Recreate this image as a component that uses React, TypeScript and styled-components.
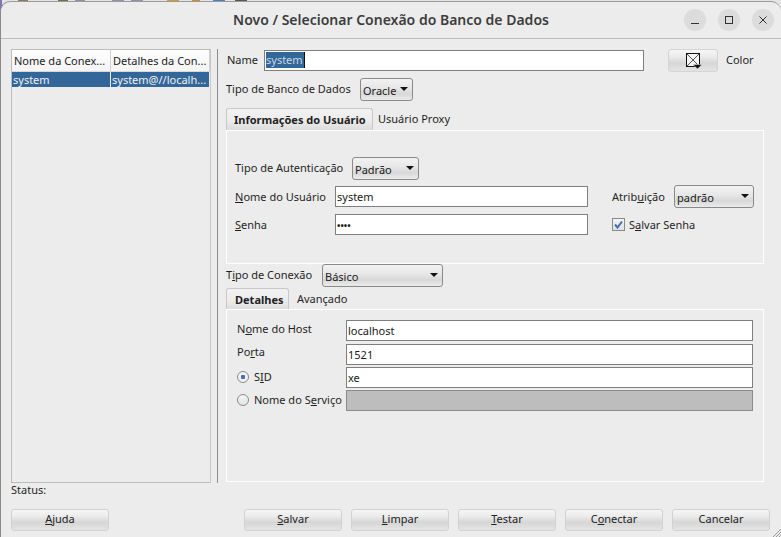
import React from "react";
import styled, { createGlobalStyle } from "styled-components";

const Global = createGlobalStyle`
  html, body {
    margin: 0;
    padding: 0;
    width: 781px;
    height: 537px;
    overflow: hidden;
    background-color: #e4e4e4;
    background-repeat: no-repeat;
    background-image:
      linear-gradient(#8a7a5c, #8a7a5c), linear-gradient(#7a6a50, #7a6a50),
      linear-gradient(#8f93a8, #8f93a8), linear-gradient(#8f93a8, #8f93a8),
      linear-gradient(#8f93a8, #8f93a8), linear-gradient(#c8a030, #c8a030),
      linear-gradient(#d08a30, #d08a30), linear-gradient(#4a80c0, #4a80c0),
      linear-gradient(#555, #555), linear-gradient(#7d78b0, #7d78b0);
    background-size:
      10px 1px, 10px 1px, 10px 1px, 12px 1px, 12px 1px, 12px 1px, 8px 1px, 12px 1px, 12px 1px, 2px 10px;
    background-position:
      18px 0, 58px 0, 75px 0, 112px 0, 131px 0, 167px 0, 192px 0, 213px 0, 235px 0, 0 0;
  }
  * { box-sizing: border-box; }
`;

const gloss = `linear-gradient(to bottom, #f6f6f6 0%, #ececec 30%, #d6d6d6 62%, #e4e4e4 100%)`;

const Caret = () => (
  <CaretIcon viewBox="0 0 8 4">
    <path d="M0 0h8L4 4z" fill="#111" />
  </CaretIcon>
);

const Key = styled.span`
  text-decoration: underline;
  text-underline-offset: 1px;
`;

const App = () => {
  return (
    <>
      <Global />
      <Window>
        <TitleBar>
          <Title>Novo / Selecionar Conexão do Banco de Dados</Title>
          <WinButtons>
            <WinButton>
              <svg width="10" height="10" viewBox="0 0 10 10">
                <path d="M1 8.5h8" stroke="#333" strokeWidth="1" />
              </svg>
            </WinButton>
            <WinButton>
              <svg width="10" height="10" viewBox="0 0 10 10">
                <rect x="1.5" y="1.5" width="7" height="7" fill="none" stroke="#333" />
              </svg>
            </WinButton>
            <WinButton>
              <svg width="10" height="10" viewBox="0 0 10 10">
                <path d="M1.5 1.5l7 7M8.5 1.5l-7 7" stroke="#333" strokeWidth="1" />
              </svg>
            </WinButton>
          </WinButtons>
        </TitleBar>

        <Content>
          <ListBox>
            <ListHead>
              <HeadCell $w={99}>Nome da Conex...</HeadCell>
              <HeadCell $w={99}>Detalhes da Con...</HeadCell>
            </ListHead>
            <ListRow>
              <RowCell $w={99}>system</RowCell>
              <RowCell $w={99}>system@//localh...</RowCell>
            </ListRow>
          </ListBox>
          <Divider />
          <Form>
            <NameRow>
              <Label>Name</Label>
              <NameInput>
                <Selected>system</Selected>
              </NameInput>
              <ColorButton>
                <svg width="16" height="17" viewBox="0 0 16 17">
                  <rect x="0.5" y="0.5" width="13" height="13" fill="#f4f4f4" stroke="#111" />
                  <path d="M1 1l12 12M13 1L1 13" stroke="#111" strokeWidth="0.7" />
                  <path d="M7 11.5h9l-4.5 4.5z" fill="#111" stroke="#ececec" strokeWidth="0.5" />
                </svg>
              </ColorButton>
              <Label>Color</Label>
            </NameRow>

            <DbRow>
              <Label>Tipo de Banco de Dados</Label>
              <Select $w={53}>
                Oracle
                <Caret />
              </Select>
            </DbRow>

            <Tabs $gap={7}>
              <ActiveTab $w={147} $pad={7}>
                Informações do Usuário
              </ActiveTab>
              <Tab $pad={5}>Usuário Proxy</Tab>
            </Tabs>
            <UserPanel>
              <AuthRow>
                <Label>Tipo de Autenticação</Label>
                <Select $w={67}>
                  Padrão
                  <Caret />
                </Select>
              </AuthRow>
              <UserRow>
                <UserFields>
                  <FieldRow>
                    <FieldLabel $w={100}>
                      <Key>N</Key>ome do Usuário
                    </FieldLabel>
                    <Input $w={253}>system</Input>
                  </FieldRow>
                  <FieldRow>
                    <FieldLabel $w={100}>
                      <Key>S</Key>enha
                    </FieldLabel>
                    <Input $w={253}>
                      <Dots>••••</Dots>
                    </Input>
                  </FieldRow>
                </UserFields>
                <SideFields>
                  <RoleRow>
                    <RoleLabel>
                      Atrib<Key>u</Key>ição
                    </RoleLabel>
                    <Select $w={80}>
                      padrão
                      <Caret />
                    </Select>
                  </RoleRow>
                  <CheckRow>
                    <CheckBox>
                      <svg width="9" height="9" viewBox="0 0 9 9">
                        <path d="M1 4.5l2.5 3L8 1.5" fill="none" stroke="#3f73b5" strokeWidth="2" />
                      </svg>
                    </CheckBox>
                    <span>
                      S<Key>a</Key>lvar Senha
                    </span>
                  </CheckRow>
                </SideFields>
              </UserRow>
            </UserPanel>

            <ConnRow>
              <Label>
                T<Key>i</Key>po de Conexão
              </Label>
              <Select $w={121}>
                Básico
                <Caret />
              </Select>
            </ConnRow>

            <Tabs $gap={1}>
              <ActiveTab $w={63} $pad={8}>
                Detalhes
              </ActiveTab>
              <Tab $pad={8}>Avançado</Tab>
            </Tabs>
            <DetailPanel>
              <DetailRow>
                <DetailLabel>
                  N<Key>o</Key>me do Host
                </DetailLabel>
                <Input $w={407}>localhost</Input>
              </DetailRow>
              <DetailRow>
                <DetailLabel>
                  Po<Key>r</Key>ta
                </DetailLabel>
                <Input $w={407}>1521</Input>
              </DetailRow>
              <DetailRow>
                <RadioLabel>
                  <Radio $on />
                  S<Key>I</Key>D
                </RadioLabel>
                <Input $w={407}>xe</Input>
              </DetailRow>
              <DetailRow>
                <RadioLabel>
                  <Radio />
                  Nome do S<Key>e</Key>rviço
                </RadioLabel>
                <DisabledInput />
              </DetailRow>
            </DetailPanel>
          </Form>
        </Content>

        <Status>Status:</Status>

        <Footer>
          <FootButton>
            <Key>A</Key>juda
          </FootButton>
          <FootRight>
            <FootButton>
              <Key>S</Key>alvar
            </FootButton>
            <FootButton>
              <Key>L</Key>impar
            </FootButton>
            <FootButton>
              <Key>T</Key>estar
            </FootButton>
            <FootButton>
              C<Key>o</Key>nectar
            </FootButton>
            <FootButton>Cancelar</FootButton>
          </FootRight>
        </Footer>
        <Grip viewBox="0 0 8 8">
          <path d="M8 0L0 8M8 3L3 8M8 6L6 8" stroke="#9a9a9a" strokeWidth="1" />
        </Grip>
      </Window>
    </>
  );
};

export default App;

const Window = styled.div`
  position: relative;
  width: 781px;
  height: 536px;
  margin-top: 1px;
  background: #ececec;
  border-top: 1px solid #9a9a9a;
  border-left: 1px solid #8a8a8a;
  border-radius: 10px 10px 0 0;
  font-family: "Noto Sans", "Open Sans", sans-serif;
  font-size: 11px;
  color: #1f1f1f;
  overflow: hidden;
`;

const TitleBar = styled.div`
  height: 37px;
  position: relative;
  display: flex;
  align-items: center;
  justify-content: center;
  padding-bottom: 2px;
  border-bottom: 1px solid #bdbdbd;
`;

const Title = styled.div`
  font-family: "Noto Sans", "Open Sans", sans-serif;
  font-size: 14px;
  font-weight: 600;
  color: #3d3d3d;
`;

const WinButtons = styled.div`
  position: absolute;
  right: 7px;
  top: 7px;
  display: flex;
  gap: 12px;
`;

const WinButton = styled.div`
  width: 22px;
  height: 22px;
  border-radius: 50%;
  background: #dcdcdc;
  display: flex;
  align-items: center;
  justify-content: center;
`;

const Content = styled.div`
  display: flex;
  height: 434px;
  margin-top: 10px;
  padding-left: 10px;
`;

const ListBox = styled.div`
  width: 200px;
  height: 434px;
  border: 1px solid #bcbcbc;
  border-right-color: #c8c8c8;
  background: #ececec;
`;

const ListHead = styled.div`
  display: flex;
  height: 22px;
  background: linear-gradient(to bottom, #fff, #f4f4f4);
  border-bottom: 1px solid #d8d8d8;
`;

const HeadCell = styled.div<{ $w: number }>`
  width: ${(p) => p.$w}px;
  border-right: 1px solid #d0d0d0;
  padding-left: 2px;
  line-height: 21px;
  white-space: nowrap;
  overflow: hidden;
  color: #222;
`;

const ListRow = styled.div`
  display: flex;
  height: 15px;
  background: #336699;
`;

const RowCell = styled.div<{ $w: number }>`
  width: ${(p) => p.$w}px;
  border-right: 1px solid #ececec;
  padding-left: 1px;
  line-height: 15px;
  color: #f2f2f2;
  white-space: nowrap;
  overflow: hidden;
`;

const Divider = styled.div`
  width: 1px;
  height: 434px;
  margin-left: 6px;
  background: #8c8c8c;
`;

const Form = styled.div`
  width: 538px;
  margin-left: 8px;
  display: flex;
  flex-direction: column;

  & > * {
    flex-shrink: 0;
  }
`;

const Label = styled.span`
  white-space: nowrap;
  padding-bottom: 2px;
`;

const NameRow = styled.div`
  display: flex;
  align-items: center;
  height: 23px;
  padding-left: 1px;

  ${Label}:first-child {
    width: 37px;
  }
`;

const NameInput = styled.div`
  width: 380px;
  height: 21px;
  background: #fff;
  border: 1px solid #7f7f7f;
  padding-left: 1px;
`;

const Selected = styled.span`
  display: block;
  width: fit-content;
  background: #336699;
  color: #c9d6e4;
  height: 16px;
  line-height: 16px;
  padding-right: 1px;
  border-right: 1px solid #111;
  margin-top: 1px;
`;

const ColorButton = styled.div`
  width: 50px;
  height: 23px;
  margin: 0 8px 0 24px;
  padding: 1px 0 0 2px;
  border: 1px solid #d4d4d4;
  border-radius: 3px;
  background: ${gloss};
  display: flex;
  align-items: center;
  justify-content: center;
`;

const DbRow = styled.div`
  display: flex;
  align-items: center;
  height: 23px;
  margin-top: 6px;

  ${Label} {
    width: 134px;
  }
`;

const Select = styled.div<{ $w: number }>`
  width: ${(p) => p.$w}px;
  height: 23px;
  display: flex;
  align-items: center;
  justify-content: space-between;
  padding: 1px 4px 0 2px;
  border: 1px solid #8a8a8a;
  border-radius: 3px;
  background: linear-gradient(to bottom, #f2f2f2 0%, #e8e8e8 40%, #d8d8d8 70%, #ebebeb 100%);
  color: #1a1a1a;
`;

const CaretIcon = styled.svg`
  width: 8px;
  height: 4px;
  margin-top: -2px;
`;

const Tabs = styled.div<{ $gap: number }>`
  display: flex;
  align-items: stretch;
  height: 22px;
  margin-top: ${(p) => p.$gap}px;
`;

const ActiveTab = styled.div<{ $w: number; $pad: number }>`
  width: ${(p) => p.$w}px;
  padding-left: ${(p) => p.$pad}px;
  border: 1px solid #c8c8c8;
  border-bottom: none;
  border-radius: 3px 3px 0 0;
  background: linear-gradient(to bottom, #f2f2f2, #ececec 55%, #dcdcdc);
  font-weight: 700;
  line-height: 22px;
  color: #222;
  white-space: nowrap;
`;

const Tab = styled.div<{ $pad: number }>`
  padding-left: ${(p) => p.$pad}px;
  line-height: 22px;
`;

const UserPanel = styled.div`
  height: 134px;
  border: 1px solid #fff;
  padding: 26px 9px 0 8px;
  display: flex;
  flex-direction: column;
`;

const AuthRow = styled.div`
  display: flex;
  align-items: center;
  height: 23px;

  ${Label} {
    width: 117px;
  }
`;

const UserRow = styled.div`
  display: flex;
  margin-top: 6px;
`;

const UserFields = styled.div`
  display: flex;
  flex-direction: column;
  gap: 7px;
  width: 377px;
`;

const FieldRow = styled.div`
  display: flex;
  align-items: center;
`;

const FieldLabel = styled.span<{ $w: number }>`
  width: ${(p) => p.$w}px;
  white-space: nowrap;
`;

const Input = styled.div<{ $w: number }>`
  width: ${(p) => p.$w}px;
  height: 21px;
  background: #fff;
  border: 1px solid #7f7f7f;
  padding-left: 1px;
  line-height: 19px;
  color: #1a1a1a;
`;

const Dots = styled.span`
  font-size: 9px;
  font-weight: 700;
`;

const SideFields = styled.div`
  display: flex;
  flex-direction: column;
  margin-top: -1px;
`;

const RoleRow = styled.div`
  display: flex;
  align-items: center;
  height: 23px;
`;

const RoleLabel = styled.span`
  width: 62px;
  white-space: nowrap;
`;

const CheckRow = styled.div`
  display: flex;
  align-items: center;
  gap: 4px;
  margin-top: 9px;
  height: 14px;
`;

const CheckBox = styled.div`
  width: 13px;
  height: 13px;
  border: 1px solid #8a8a8a;
  background: linear-gradient(to bottom, #f4f4f4, #e0e0e0);
  display: flex;
  align-items: center;
  justify-content: center;
`;

const ConnRow = styled.div`
  display: flex;
  align-items: center;
  height: 23px;

  ${Label} {
    width: 96px;
  }
`;

const DetailPanel = styled.div`
  height: 173px;
  margin-top: -1px;
  border: 1px solid #fff;
  padding: 10px 9px 0 10px;
  display: flex;
  flex-direction: column;
  gap: 2px;
`;

const DetailLabel = styled.span`
  width: 109px;
  white-space: nowrap;
  line-height: 16px;
`;

const DetailRow = styled.div`
  display: flex;
  align-items: flex-start;
  height: 21px;

  &:first-child {
    height: 22px;
  }
  &:first-child ${DetailLabel} {
    padding-top: 1px;
  }
`;

const RadioLabel = styled.span`
  width: 109px;
  display: flex;
  align-items: center;
  height: 19px;
  white-space: pre;
`;

const Radio = styled.span<{ $on?: boolean }>`
  width: 12px;
  height: 12px;
  margin-right: 5px;
  border-radius: 50%;
  border: 1px solid #8a8a8a;
  background: ${(p) =>
    p.$on
      ? "radial-gradient(circle, #3f73b5 0 2px, #f2f2f2 2.5px)"
      : "linear-gradient(to bottom, #f6f6f6, #e4e4e4)"};
`;

const DisabledInput = styled.div`
  width: 407px;
  height: 21px;
  background: #bdbdbd;
  border: 1px solid #8c8c8c;
`;

const Status = styled.div`
  height: 15px;
  padding-left: 10px;
  line-height: 14px;
`;

const Footer = styled.div`
  display: flex;
  justify-content: space-between;
  padding: 0 11px 0 10px;
  margin-top: 11px;
`;

const FootRight = styled.div`
  display: flex;
  gap: 9px;
`;

const FootButton = styled.div`
  width: 98px;
  height: 22px;
  border: 1px solid #d2d2d2;
  border-radius: 3px;
  background: ${gloss};
  text-align: center;
  line-height: 18px;
  color: #222;
`;

const Grip = styled.svg`
  position: absolute;
  right: 0;
  bottom: 0;
  width: 8px;
  height: 8px;
`;
